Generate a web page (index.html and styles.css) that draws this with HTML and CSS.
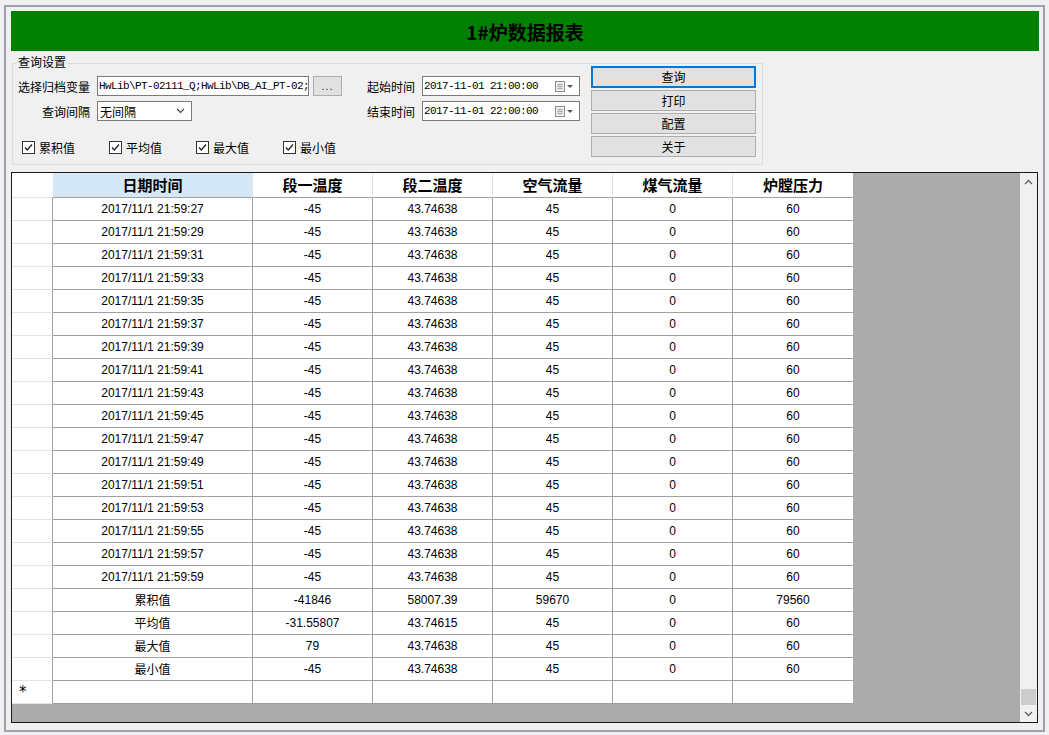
FILE: index.html
```html
<!DOCTYPE html>
<html lang="zh-CN">
<head>
<meta charset="utf-8">
<title>1#炉数据报表</title>
<link rel="stylesheet" href="styles.css">
</head>
<body>
<div class="window">
  <div class="title">1#炉数据报表</div>

  <div class="group">
    <div class="group-title">查询设置</div>
    <div class="left">
      <div class="row">
        <span class="lbl">选择归档变量</span>
        <div class="textbox">HwLib\PT-02111_Q;HwLib\DB_AI_PT-02;</div>
        <div class="browse">...</div>
      </div>
      <div class="row">
        <span class="lbl">查询间隔</span>
        <div class="combo"><span>无间隔</span>
          <svg class="chev" width="9" height="6" viewBox="0 0 9 6"><polyline points="1,1 4.5,4.5 8,1" fill="none" stroke="#444" stroke-width="1.1"/></svg>
        </div>
      </div>
      <div class="checks">
        <label class="chk"><svg width="13" height="13" viewBox="0 0 13 13"><rect x="0.5" y="0.5" width="12" height="12" fill="#fff" stroke="#333"/><polyline points="3,6.5 5.3,9 10,3.5" fill="none" stroke="#222" stroke-width="1.3"/></svg><span>累积值</span></label>
        <label class="chk"><svg width="13" height="13" viewBox="0 0 13 13"><rect x="0.5" y="0.5" width="12" height="12" fill="#fff" stroke="#333"/><polyline points="3,6.5 5.3,9 10,3.5" fill="none" stroke="#222" stroke-width="1.3"/></svg><span>平均值</span></label>
        <label class="chk"><svg width="13" height="13" viewBox="0 0 13 13"><rect x="0.5" y="0.5" width="12" height="12" fill="#fff" stroke="#333"/><polyline points="3,6.5 5.3,9 10,3.5" fill="none" stroke="#222" stroke-width="1.3"/></svg><span>最大值</span></label>
        <label class="chk"><svg width="13" height="13" viewBox="0 0 13 13"><rect x="0.5" y="0.5" width="12" height="12" fill="#fff" stroke="#333"/><polyline points="3,6.5 5.3,9 10,3.5" fill="none" stroke="#222" stroke-width="1.3"/></svg><span>最小值</span></label>
      </div>
    </div>

    <div class="time">
      <div class="row">
        <span class="tlbl">起始时间</span>
        <div class="picker"><span class="ptext">2017-11-01 21:00:00</span>
          <svg width="19" height="11" viewBox="0 0 19 11"><rect x="0.5" y="0.5" width="9" height="10" fill="#f4f4f4" stroke="#8a8a8a"/><path d="M2 3.5H8M2 5.5H8M2 7.5H8M4 2.5V9M6 2.5V9" stroke="#b4b4b4" stroke-width="1"/><polygon points="12,4 18,4 15,7" fill="#555"/></svg>
        </div>
      </div>
      <div class="row">
        <span class="tlbl">结束时间</span>
        <div class="picker"><span class="ptext">2017-11-01 22:00:00</span>
          <svg width="19" height="11" viewBox="0 0 19 11"><rect x="0.5" y="0.5" width="9" height="10" fill="#f4f4f4" stroke="#8a8a8a"/><path d="M2 3.5H8M2 5.5H8M2 7.5H8M4 2.5V9M6 2.5V9" stroke="#b4b4b4" stroke-width="1"/><polygon points="12,4 18,4 15,7" fill="#555"/></svg>
        </div>
      </div>
    </div>

    <div class="buttons">
      <div class="btn focus">查询</div>
      <div class="btn">打印</div>
      <div class="btn">配置</div>
      <div class="btn">关于</div>
    </div>
  </div>

  <div class="grid">
    <div class="grid-area">
      <table class="data">
        <colgroup><col class="c0"><col class="c1"><col class="c2"><col class="c2"><col class="c2"><col class="c2"><col class="c2"></colgroup>
        <thead>
          <tr><th class="rh"></th><th class="sel">日期时间</th><th>段一温度</th><th>段二温度</th><th>空气流量</th><th>煤气流量</th><th class="last">炉膛压力</th></tr>
        </thead>
        <tbody>
          <tr><td class="rh"></td><td>2017/11/1 21:59:27</td><td>-45</td><td>43.74638</td><td>45</td><td>0</td><td class="last">60</td></tr>
          <tr><td class="rh"></td><td>2017/11/1 21:59:29</td><td>-45</td><td>43.74638</td><td>45</td><td>0</td><td class="last">60</td></tr>
          <tr><td class="rh"></td><td>2017/11/1 21:59:31</td><td>-45</td><td>43.74638</td><td>45</td><td>0</td><td class="last">60</td></tr>
          <tr><td class="rh"></td><td>2017/11/1 21:59:33</td><td>-45</td><td>43.74638</td><td>45</td><td>0</td><td class="last">60</td></tr>
          <tr><td class="rh"></td><td>2017/11/1 21:59:35</td><td>-45</td><td>43.74638</td><td>45</td><td>0</td><td class="last">60</td></tr>
          <tr><td class="rh"></td><td>2017/11/1 21:59:37</td><td>-45</td><td>43.74638</td><td>45</td><td>0</td><td class="last">60</td></tr>
          <tr><td class="rh"></td><td>2017/11/1 21:59:39</td><td>-45</td><td>43.74638</td><td>45</td><td>0</td><td class="last">60</td></tr>
          <tr><td class="rh"></td><td>2017/11/1 21:59:41</td><td>-45</td><td>43.74638</td><td>45</td><td>0</td><td class="last">60</td></tr>
          <tr><td class="rh"></td><td>2017/11/1 21:59:43</td><td>-45</td><td>43.74638</td><td>45</td><td>0</td><td class="last">60</td></tr>
          <tr><td class="rh"></td><td>2017/11/1 21:59:45</td><td>-45</td><td>43.74638</td><td>45</td><td>0</td><td class="last">60</td></tr>
          <tr><td class="rh"></td><td>2017/11/1 21:59:47</td><td>-45</td><td>43.74638</td><td>45</td><td>0</td><td class="last">60</td></tr>
          <tr><td class="rh"></td><td>2017/11/1 21:59:49</td><td>-45</td><td>43.74638</td><td>45</td><td>0</td><td class="last">60</td></tr>
          <tr><td class="rh"></td><td>2017/11/1 21:59:51</td><td>-45</td><td>43.74638</td><td>45</td><td>0</td><td class="last">60</td></tr>
          <tr><td class="rh"></td><td>2017/11/1 21:59:53</td><td>-45</td><td>43.74638</td><td>45</td><td>0</td><td class="last">60</td></tr>
          <tr><td class="rh"></td><td>2017/11/1 21:59:55</td><td>-45</td><td>43.74638</td><td>45</td><td>0</td><td class="last">60</td></tr>
          <tr><td class="rh"></td><td>2017/11/1 21:59:57</td><td>-45</td><td>43.74638</td><td>45</td><td>0</td><td class="last">60</td></tr>
          <tr><td class="rh"></td><td>2017/11/1 21:59:59</td><td>-45</td><td>43.74638</td><td>45</td><td>0</td><td class="last">60</td></tr>
          <tr><td class="rh"></td><td class="cjk">累积值</td><td>-41846</td><td>58007.39</td><td>59670</td><td>0</td><td class="last">79560</td></tr>
          <tr><td class="rh"></td><td class="cjk">平均值</td><td>-31.55807</td><td>43.74615</td><td>45</td><td>0</td><td class="last">60</td></tr>
          <tr><td class="rh"></td><td class="cjk">最大值</td><td>79</td><td>43.74638</td><td>45</td><td>0</td><td class="last">60</td></tr>
          <tr><td class="rh"></td><td class="cjk">最小值</td><td>-45</td><td>43.74638</td><td>45</td><td>0</td><td class="last">60</td></tr>
          <tr class="newrow"><td class="rh star">*</td><td></td><td></td><td></td><td></td><td></td><td class="last"></td></tr>
        </tbody>
      </table>
    </div>
    <div class="vscroll">
      <div class="sbtn"><svg width="9" height="6" viewBox="0 0 9 6"><polyline points="1,5 4.5,1.5 8,5" fill="none" stroke="#606060" stroke-width="1.3"/></svg></div>
      <div class="track"><div class="thumb"></div></div>
      <div class="sbtn"><svg width="9" height="6" viewBox="0 0 9 6"><polyline points="1,1 4.5,4.5 8,1" fill="none" stroke="#606060" stroke-width="1.3"/></svg></div>
    </div>
  </div>
</div>
</body>
</html>
```

FILE: styles.css
```css
* { box-sizing: border-box; }

body {
  margin: 0;
  background: #f0f0f0;
  font-family: "Noto Sans CJK SC", "Liberation Sans", sans-serif;
  font-size: 12px;
  color: #000;
}

.window {
  margin: 5px 0 0 4px;
  width: 1041px;
  height: 727px;
  border: 2px solid #a39eae;
  padding: 4px 4px 0 5px;
}

.title {
  height: 40px;
  background: #008000;
  display: flex;
  align-items: center;
  justify-content: center;
  font-weight: 700;
  font-size: 19px;
  color: #000;
}

.group {
  position: relative;
  margin: 12px 0 0 1px;
  width: 751px;
  height: 102px;
  border: 1px solid #dcdcdc;
  display: flex;
  align-items: flex-start;
  padding-left: 5px;
}

.group-title {
  position: absolute;
  top: -10px;
  left: 4px;
  padding: 0 1px;
  background: #f0f0f0;
  line-height: 16px;
}

.left {
  flex: none;
  padding-top: 12px;
  width: 324px;
}

.row {
  display: flex;
  align-items: center;
  height: 20px;
}

.row + .row { margin-top: 5px; }

.lbl {
  flex: none;
  width: 72px;
  margin-right: 7px;
  text-align: right;
  white-space: nowrap;
}

.textbox {
  flex: none;
  width: 212px;
  height: 20px;
  border: 1px solid #7a7a7a;
  background: #fff;
  padding-left: 1px;
  font-family: "Liberation Mono", monospace;
  font-size: 11px;
  letter-spacing: -0.6px;
  line-height: 18px;
  white-space: nowrap;
  overflow: hidden;
}

.browse {
  flex: none;
  margin-left: 4px;
  width: 29px;
  height: 20px;
  border: 1px solid #adadad;
  background: #e1e1e1;
  text-align: center;
  font-family: "Liberation Sans", sans-serif;
  font-size: 11px;
  letter-spacing: 1px;
  line-height: 18px;
  color: #333;
}

.combo {
  width: 95px;
  height: 20px;
  border: 1px solid #7a7a7a;
  background: #fff;
  display: flex;
  align-items: center;
  justify-content: space-between;
  padding: 0 6px 0 2px;
}

.checks {
  display: flex;
  align-items: center;
  height: 16px;
  margin-top: 18px;
  width: 360px;
}

.chk {
  flex: none;
  width: 87px;
  display: flex;
  align-items: center;
  padding-left: 4px;
}

.chk svg { flex: none; margin-right: 4px; }

.time {
  flex: none;
  margin-left: 25px;
  padding-top: 12px;
}

.tlbl {
  width: 48px;
  margin-right: 7px;
  white-space: nowrap;
}

.picker {
  width: 158px;
  height: 20px;
  border: 1px solid #7a7a7a;
  background: #fff;
  display: flex;
  align-items: center;
  justify-content: space-between;
  padding: 0 5px 0 1px;
}

.ptext {
  font-family: "Liberation Mono", monospace;
  font-size: 11px;
  letter-spacing: -0.6px;
  white-space: nowrap;
}

.buttons {
  flex: none;
  margin-left: 11px;
  margin-top: 2px;
  width: 165px;
  display: flex;
  flex-direction: column;
  gap: 2px;
}

.btn {
  height: 21px;
  border: 1px solid #adadad;
  background: #e1e1e1;
  text-align: center;
  line-height: 19px;
}

.btn.focus {
  height: 22px;
  border: 2px solid #0078d7;
  line-height: 18px;
}

.grid {
  margin-top: 7px;
  width: 1027px;
  height: 551px;
  border: 1px solid #1a1a1a;
  display: flex;
}

.grid-area {
  flex: 1;
  background: #ababab;
  overflow: hidden;
}

.data {
  border-collapse: separate;
  border-spacing: 0;
  table-layout: fixed;
  width: 841px;
}

.c0 { width: 41px; }
.c1 { width: 200px; }
.c2 { width: 120px; }

.data th {
  height: 25px;
  padding: 0;
  background: #fff;
  border-right: 1px solid #e2e2e2;
  border-bottom: 1px solid #a0a0a0;
  font-size: 15px;
  font-weight: 700;
  line-height: 24px;
  text-align: center;
}

.data th.sel { background: #d5e8f8; }
.data th.rh { border-bottom-color: #e2e2e2; border-right: none; }

.data td {
  height: 23px;
  padding: 0;
  background: #fff;
  border-right: 1px solid #a0a0a0;
  border-bottom: 1px solid #a0a0a0;
  font-family: "Liberation Sans", sans-serif;
  font-size: 12px;
  line-height: 22px;
  text-align: center;
  white-space: nowrap;
}

.data td.cjk {
  font-family: "Noto Sans CJK SC", sans-serif;
}

.data td.rh {
  border-bottom-color: #e4e4e4;
}

.data .last { border-right: none; }

.data td.star {
  text-align: left;
  padding-left: 7px;
  font-family: "DejaVu Sans", sans-serif;
  font-size: 15px;
  line-height: 22px;
}

.vscroll {
  width: 17px;
  background: #f0f0f0;
  display: flex;
  flex-direction: column;
}

.sbtn {
  height: 17px;
  display: flex;
  align-items: center;
  justify-content: center;
}

.track {
  flex: 1;
  display: flex;
  flex-direction: column;
  justify-content: flex-end;
}

.thumb {
  height: 16px;
  margin: 0 1px;
  background: #cdcdcd;
}
```
